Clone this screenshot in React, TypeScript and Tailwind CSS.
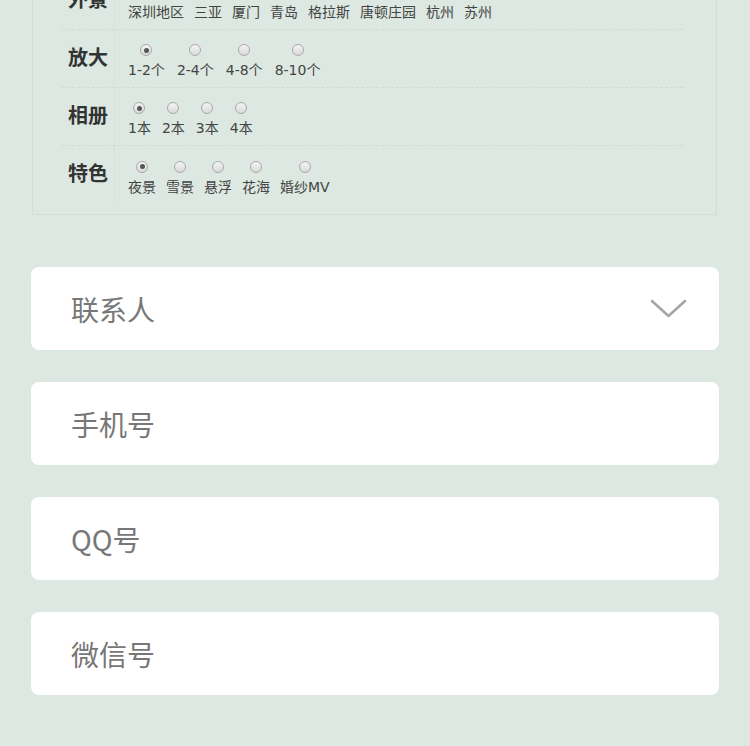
import React from "react";

type Row = { label: string; options: string[]; gap: string };

const rows: Row[] = [
  { label: "外景", options: ["深圳地区", "三亚", "厦门", "青岛", "格拉斯", "唐顿庄园", "杭州", "苏州"], gap: "gap-[10px]" },
  { label: "放大", options: ["1-2个", "2-4个", "4-8个", "8-10个"], gap: "gap-[12px]" },
  { label: "相册", options: ["1本", "2本", "3本", "4本"], gap: "gap-[11px]" },
  { label: "特色", options: ["夜景", "雪景", "悬浮", "花海", "婚纱MV"], gap: "gap-[10px]" },
];

function Radio({ checked }: { checked: boolean }) {
  return (
    <span className="flex h-[12px] w-[12px] items-center justify-center rounded-full border border-[#a9a9a9] bg-gradient-to-b from-[#f4f4f4] to-[#d9d9d9]">
      {checked && <span className="h-[5px] w-[5px] rounded-full bg-[#555]" />}
    </span>
  );
}

function OptionRow({ row, last }: { row: Row; last: boolean }) {
  return (
    <div className={`flex h-[58px] items-center ${last ? "" : "border-b border-dashed border-[#cfdcd5]"}`}>
      <div className="flex h-full w-[53px] items-center justify-center border-r border-dotted border-[#d3ded8] pb-[4px] text-[20px] font-bold text-[#333]">
        {row.label}
      </div>
      <div
        className={`mt-[5px] flex pl-[13px] ${row.gap}`}
        style={{ fontFamily: '"DejaVu Sans", "Noto Sans CJK SC", sans-serif' }}
      >
        {row.options.map((o, i) => (
          <label key={o} className="flex flex-col items-center">
            <Radio checked={i === 0} />
            <span className="mt-[6px] text-[14px] leading-[16px] text-[#444]">{o}</span>
          </label>
        ))}
      </div>
    </div>
  );
}

function Field({ text, arrow }: { text: string; arrow?: boolean }) {
  return (
    <div className="flex h-[83px] items-center justify-between rounded-[8px] bg-white pl-[40px] pr-[32px]">
      <span className="text-[28px] text-[#777]">{text}</span>
      {arrow && (
        <svg width="37" height="21" viewBox="0 0 37 21" fill="none">
          <polyline points="2,3 18.5,18 35,3" stroke="#a6a6a6" strokeWidth="2.6" strokeLinecap="round" strokeLinejoin="round" />
        </svg>
      )}
    </div>
  );
}

export default function App() {
  return (
    <div
      className="min-h-screen overflow-hidden bg-[#dce8e1] pb-[50px]"
      style={{ fontFamily: '"Noto Sans CJK SC", "Noto Sans", sans-serif' }}
    >
      <div className="ml-[32px] mr-[33px] -mt-[29px] border border-[#d2ddd7] pb-[10px] pl-[29px] pr-[33px]">
        {rows.map((r, i) => (
          <OptionRow key={r.label} row={r} last={i === rows.length - 1} />
        ))}
      </div>

      <div className="mx-[31px] mt-[52px] flex flex-col gap-[32px]">
        <Field text="联系人" arrow />
        <Field text="手机号" />
        <Field text="QQ号" />
        <Field text="微信号" />
      </div>
    </div>
  );
}
